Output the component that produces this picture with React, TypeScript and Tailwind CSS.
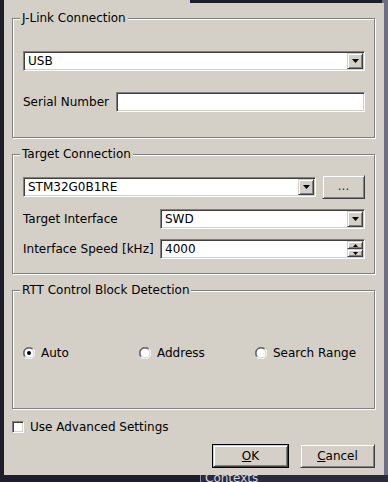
import React from 'react';

const raised =
  'border border-t-[#d4d0c8] border-l-[#d4d0c8] border-r-[#404040] border-b-[#404040] shadow-[inset_1px_1px_0_#fff,inset_-1px_-1px_0_#808080] bg-[#d4d0c8]';
const sunken =
  'border border-t-[#808080] border-l-[#808080] border-r-white border-b-white shadow-[inset_1px_1px_0_#404040,inset_-1px_-1px_0_#d4d0c8] bg-white';

const Group = ({ title, className, children }: { title: string; className: string; children: React.ReactNode }) => (
  <div className={`relative border border-[#808080] shadow-[inset_1px_1px_0_#fff,1px_1px_0_#fff] ${className}`}>
    <span className="absolute left-[7px] -top-[8px] bg-[#d4d0c8] px-[2px] leading-[14px]">{title}</span>
    {children}
  </div>
);

const Arrow = ({ up, small }: { up?: boolean; small?: boolean }) => (
  <svg width={small ? 5 : 7} height={small ? 3 : 4} viewBox={small ? '0 0 5 3' : '0 0 7 4'}>
    {small ? (
      <path d={up ? 'M2.5 0L5 3H0Z' : 'M0 0H5L2.5 3Z'} fill="#000" />
    ) : (
      <path d="M0 0H7L3.5 4Z" fill="#000" />
    )}
  </svg>
);

const Combo = ({ value, className }: { value: string; className: string }) => (
  <div className={`flex h-[20px] items-center p-[1px] ${sunken} ${className}`}>
    <span className="flex-1 pl-[3px]">{value}</span>
    <div className={`flex h-[16px] w-[16px] items-center justify-center ${raised}`}>
      <Arrow />
    </div>
  </div>
);

const Radio = ({ checked }: { checked?: boolean }) => (
  <svg width="12" height="12" viewBox="0 0 12 12" className="shrink-0">
    <circle cx="6" cy="6" r="5.5" fill="#fff" />
    <path d="M1.76 10.24A6 6 0 0 1 10.24 1.76" fill="none" stroke="#808080" strokeWidth="1" />
    <path d="M2.46 9.54A5 5 0 0 1 9.54 2.46" fill="none" stroke="#404040" strokeWidth="1" />
    <path d="M10.24 1.76A6 6 0 0 1 1.76 10.24" fill="none" stroke="#fff" strokeWidth="1" />
    <path d="M9.54 2.46A5 5 0 0 1 2.46 9.54" fill="none" stroke="#d4d0c8" strokeWidth="1" />
    {checked && <circle cx="6" cy="6" r="2" fill="#000" />}
  </svg>
);

export default function App() {
  return (
    <div className="relative h-[482px] w-[388px] overflow-hidden bg-[#1e1d2b] font-['DejaVu_Sans',sans-serif] text-[12px] leading-[14px] text-black">
      {/* desktop behind the dialog */}
      <div className="absolute right-0 top-0 h-[482px] w-[6px] bg-[#6e6d82]" />
      <div className="absolute left-[4px] top-0 h-[3px] w-[186px] bg-[#d4d0c8]" />
      <div className="absolute left-[200px] top-[475px] h-[10px] w-[188px] border-l border-[#8a8aa0] bg-[#2a2a3c] pl-[4px] text-[#d0d0e0]">
        <span className="relative -top-[4px]">Contexts</span>
      </div>

      {/* dialog */}
      <div className="absolute left-[4px] top-[3px] flex h-[472px] w-[380px] flex-col bg-[#d4d0c8] pl-[8px] pr-[9px] pt-[15px]">
        <Group title="J-Link Connection" className="h-[120px] pl-[10px] pr-[9px] pt-[32px]">
          <Combo value="USB" className="w-full" />
          <div className="mt-[21px] flex items-center">
            <span className="w-[93px]">Serial Number</span>
            <div className={`h-[20px] flex-1 ${sunken}`} />
          </div>
        </Group>

        <Group title="Target Connection" className="mt-[16px] flex h-[120px] flex-col gap-[10px] pl-[10px] pr-[9px] pt-[20px]">
          <div className="flex h-[24px] items-center gap-[6px]">
            <Combo value="STM32G0B1RE" className="flex-1" />
            <div className={`flex h-[24px] w-[43px] items-center justify-center pb-[3px] text-[#2e2a26] ${raised}`}>...</div>
          </div>
          <div className="flex items-center">
            <span className="w-[137px]">Target Interface</span>
            <Combo value="SWD" className="flex-1" />
          </div>
          <div className="flex items-center">
            <span className="w-[137px]">Interface Speed [kHz]</span>
            <div className={`flex h-[20px] flex-1 items-center p-[1px] ${sunken}`}>
              <span className="flex-1 pl-[3px]">4000</span>
              <div className="flex flex-col">
                <div className={`flex h-[8px] w-[16px] items-center justify-center ${raised}`}>
                  <Arrow up small />
                </div>
                <div className={`flex h-[8px] w-[16px] items-center justify-center ${raised}`}>
                  <Arrow small />
                </div>
              </div>
            </div>
          </div>
        </Group>

        <Group title="RTT Control Block Detection" className="mt-[16px] h-[119px] pl-[10px] pt-[55px]">
          <div className="grid grid-cols-[116px_116px_1fr]">
            {['Auto', 'Address', 'Search Range'].map((label, i) => (
              <div key={label} className="flex items-center gap-[6px]">
                <Radio checked={i === 0} />
                <span>{label}</span>
              </div>
            ))}
          </div>
        </Group>

        <div className="mt-[11px] flex items-center gap-[6px]">
          <div className={`h-[12px] w-[12px] ${sunken}`} />
          <span>Use Advanced Settings</span>
        </div>

        <div className="mt-[10px] flex justify-end gap-[11px]">
          <div className="h-[24px] w-[77px] border border-black">
            <div className={`flex h-full w-full items-center justify-center ${raised}`}>
              <span><span className="underline">O</span>K</span>
            </div>
          </div>
          <div className={`flex h-[24px] w-[75px] items-center justify-center ${raised}`}>
            <span><span className="underline">C</span>ancel</span>
          </div>
        </div>
      </div>
    </div>
  );
}
